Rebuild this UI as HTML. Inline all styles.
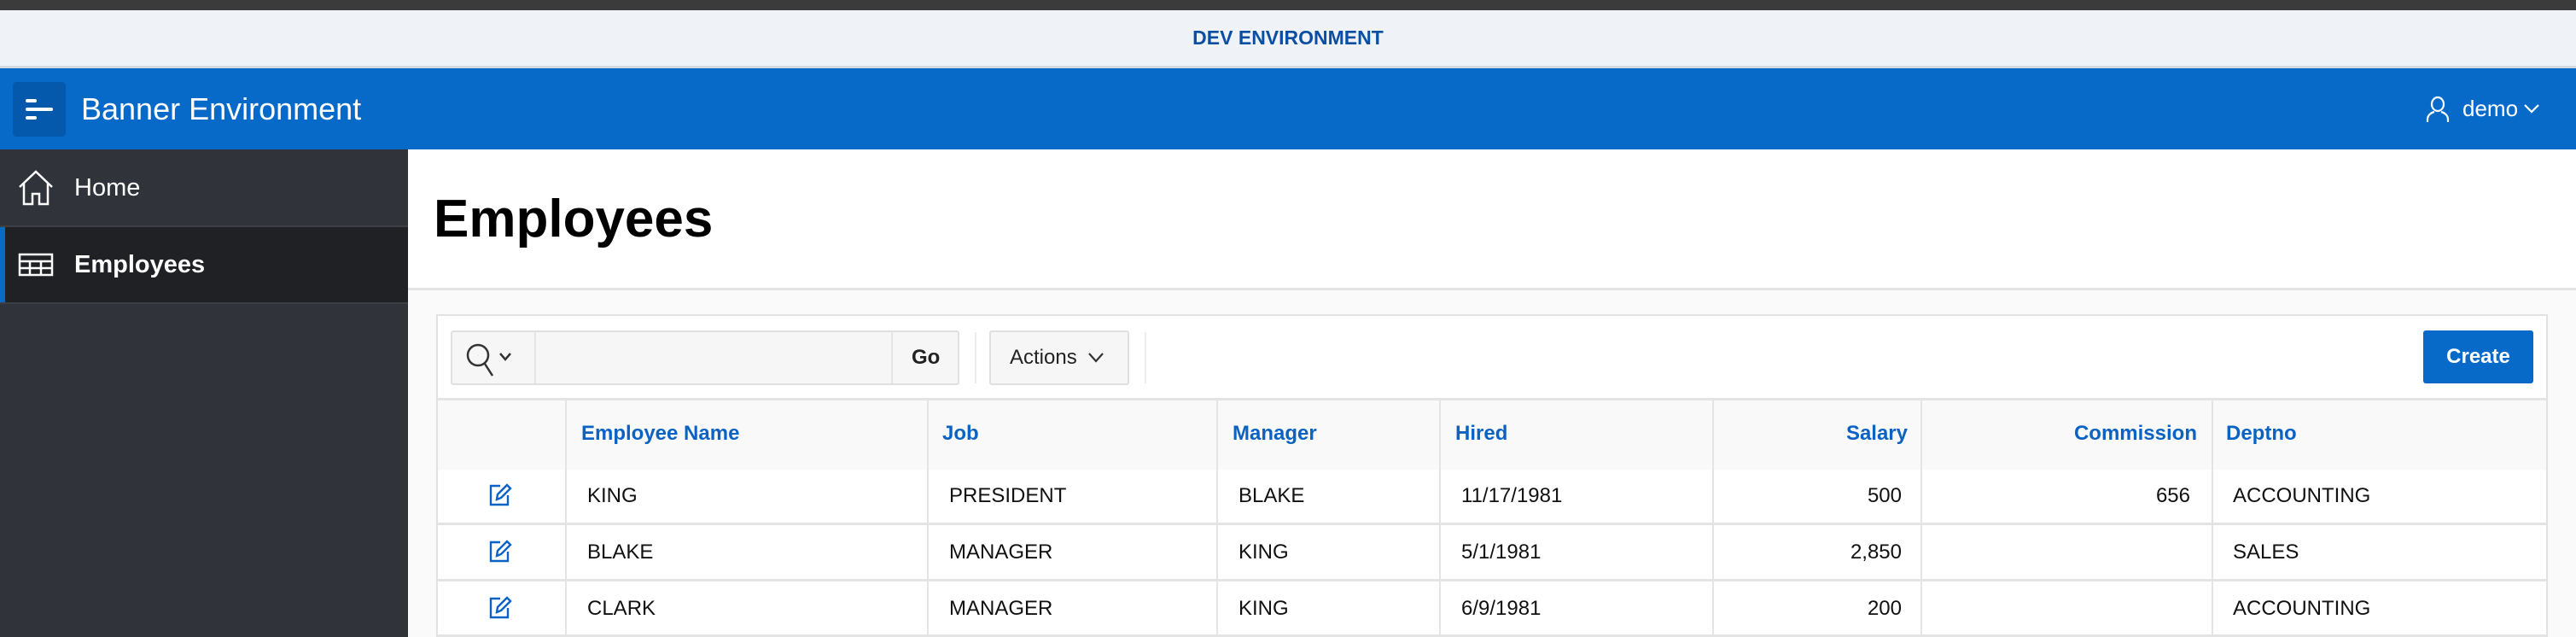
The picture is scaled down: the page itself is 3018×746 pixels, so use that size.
<!DOCTYPE html>
<html style="overflow:hidden;width:3018px;height:746px"><head><meta charset="utf-8"><style>
*{margin:0;padding:0;box-sizing:border-box}
body{width:3018px;height:746px;overflow:hidden;background:#fafafa;font-family:"Liberation Sans",sans-serif;position:relative}
.a{position:absolute}
.th{color:#0a63c4;font-weight:bold;font-size:24px}
.td{color:#111;font-size:24px}
.vl{width:2px;background:#e4e4e4}
.hl{height:3px;background:#e4e4e4}
</style></head><body>
<div class="a" style="left:0;top:0;width:3018px;height:12px;background:#3b3b3b"></div>
<div class="a" style="left:0;top:12px;width:3018px;height:65px;background:#eff2f6"></div>
<div class="a" style="left:0;top:29px;width:3018px;text-align:center;color:#0b4fa3;font-weight:bold;font-size:23px;line-height:30px">DEV ENVIRONMENT</div>
<div class="a" style="left:0;top:77px;width:3018px;height:3px;background:#d4d9df"></div>
<div class="a" style="left:0;top:80px;width:3018px;height:95px;background:#076ac8"></div>
<div class="a" style="left:15px;top:96px;width:62px;height:64px;background:#0559ad;border-radius:4px"></div>
<div class="a" style="left:30px;top:116px;width:13px;height:4px;background:#fff;border-radius:2px"></div>
<div class="a" style="left:30px;top:126px;width:32px;height:4px;background:#fff;border-radius:2px"></div>
<div class="a" style="left:30px;top:136px;width:13px;height:4px;background:#fff;border-radius:2px"></div>
<div class="a" style="left:95px;top:106px;color:#fff;font-size:36px;line-height:44px">Banner Environment</div>
<svg class="a" style="left:2842px;top:112px" width="28" height="32" viewBox="0 0 28 32" fill="none" stroke="#fff" stroke-width="2.2"><ellipse cx="14" cy="10" rx="7" ry="8"/><path d="M2 31v-3c0-5 4-8 8-9M26 31v-3c0-5-4-8-8-9"/></svg>
<div class="a" style="left:2885px;top:110px;color:#fff;font-size:26px;line-height:34px">demo</div>
<svg class="a" style="left:2956px;top:121px" width="20" height="12" viewBox="0 0 20 12" fill="none" stroke="#fff" stroke-width="2.2"><path d="M2 2l8 8 8-8"/></svg>
<div class="a" style="left:0;top:175px;width:478px;height:571px;background:#30333a"></div>
<svg class="a" style="left:21px;top:199px" width="42" height="42" viewBox="0 0 42 42" fill="none" stroke="#fff" stroke-width="2.5"><path d="M2 20L21 2l19 18M7 15v25h10V28h8v12h10V15"/></svg>
<div class="a" style="left:87px;top:202px;color:#fff;font-size:29px;line-height:36px">Home</div>
<div class="a" style="left:0;top:264px;width:478px;height:2px;background:#3c3f46"></div>
<div class="a" style="left:0;top:266px;width:478px;height:88px;background:#1f2124"></div>
<div class="a" style="left:0;top:266px;width:6px;height:88px;background:#076ac8"></div>
<div class="a" style="left:0;top:354px;width:478px;height:2px;background:#3c3f46"></div>
<svg class="a" style="left:21px;top:296px" width="42" height="28" viewBox="0 0 42 28" fill="none" stroke="#fff" stroke-width="2.5"><rect x="2" y="2" width="38" height="24"/><path d="M2 10h38M2 18h38M14 10v16M27 10v16"/></svg>
<div class="a" style="left:87px;top:292px;color:#fff;font-size:29px;line-height:36px;font-weight:bold">Employees</div>
<div class="a" style="left:478px;top:175px;width:2540px;height:162px;background:#fff"></div>
<div class="a" style="left:478px;top:337px;width:2540px;height:3px;background:#e4e4e4"></div>
<div class="a" style="left:508px;top:221px;font-size:62px;font-weight:bold;line-height:72px;color:#000">Employees</div>
<div class="a" style="left:511px;top:368px;width:2474px;height:378px;background:#fff;border:2px solid #e2e2e2;border-bottom:none"></div>
<div class="a" style="left:528px;top:387px;width:596px;height:64px;background:#f6f6f6;border:2px solid #e0e0e0;border-radius:3px"></div>
<div class="a" style="left:626px;top:389px;width:2px;height:60px;background:#e4e4e4"></div>
<div class="a" style="left:1044px;top:389px;width:2px;height:60px;background:#e4e4e4"></div>
<svg class="a" style="left:544px;top:400px" width="62" height="42" viewBox="0 0 62 42" fill="none" stroke="#333" stroke-width="2.5"><circle cx="16" cy="16" r="12"/><path d="M24 26l9 14M42 14l6 7 6-7"/></svg>
<div class="a" style="left:1068px;top:403px;font-weight:bold;font-size:24px;color:#222;line-height:32px">Go</div>
<div class="a" style="left:1142px;top:389px;width:2px;height:60px;background:#ececec"></div>
<div class="a" style="left:1159px;top:387px;width:164px;height:64px;background:#f6f6f6;border:2px solid #e0e0e0;border-radius:3px"></div>
<div class="a" style="left:1183px;top:403px;font-size:24px;color:#222;line-height:32px">Actions</div>
<svg class="a" style="left:1274px;top:412px" width="20" height="14" viewBox="0 0 20 14" fill="none" stroke="#333" stroke-width="2.2"><path d="M2 2l8 9 8-9"/></svg>
<div class="a" style="left:1341px;top:389px;width:2px;height:60px;background:#ececec"></div>
<div class="a" style="left:2839px;top:387px;width:129px;height:62px;background:#076ac8;border-radius:3px;color:#fff;font-weight:bold;font-size:24px;text-align:center;line-height:62px">Create</div>
<div class="a" style="left:513px;top:466px;width:2470px;height:3px;background:#e4e4e4"></div>
<div class="a" style="left:513px;top:469px;width:2470px;height:81px;background:#f9f9f9"></div>
<div class="a hl" style="left:513px;top:612px;width:2470px"></div>
<div class="a hl" style="left:513px;top:678px;width:2470px"></div>
<div class="a hl" style="left:513px;top:743px;width:2470px"></div>
<div class="a vl" style="left:662px;top:469px;height:277px"></div>
<div class="a vl" style="left:1086px;top:469px;height:277px"></div>
<div class="a vl" style="left:1425px;top:469px;height:277px"></div>
<div class="a vl" style="left:1686px;top:469px;height:277px"></div>
<div class="a vl" style="left:2006px;top:469px;height:277px"></div>
<div class="a vl" style="left:2250px;top:469px;height:277px"></div>
<div class="a vl" style="left:2591px;top:469px;height:277px"></div>
<div class="a th" style="left:681px;top:494px">Employee Name</div>
<div class="a th" style="left:1104px;top:494px">Job</div>
<div class="a th" style="left:1444px;top:494px">Manager</div>
<div class="a th" style="left:1705px;top:494px">Hired</div>
<div class="a th" style="left:2006px;top:494px;width:229px;text-align:right">Salary</div>
<div class="a th" style="left:2250px;top:494px;width:324px;text-align:right">Commission</div>
<div class="a th" style="left:2608px;top:494px">Deptno</div>
<svg width="0" height="0" style="position:absolute"><defs><g id="e"><path d="M14 4H3v22h20V15" fill="none" stroke="#0a63c4" stroke-width="2.4"/><path d="M10 20l1-6L22 3l4 4-11 11z" fill="none" stroke="#0a63c4" stroke-width="2.4"/></g></defs></svg>
<svg class="a" style="left:572px;top:565px" width="30" height="30"><use href="#e"/></svg>
<svg class="a" style="left:572px;top:631px" width="30" height="30"><use href="#e"/></svg>
<svg class="a" style="left:572px;top:697px" width="30" height="30"><use href="#e"/></svg>
<div class="a td" style="left:688px;top:567px">KING</div>
<div class="a td" style="left:1112px;top:567px">PRESIDENT</div>
<div class="a td" style="left:1451px;top:567px">BLAKE</div>
<div class="a td" style="left:1712px;top:567px">11/17/1981</div>
<div class="a td" style="left:2006px;top:567px;width:222px;text-align:right">500</div>
<div class="a td" style="left:2250px;top:567px;width:316px;text-align:right">656</div>
<div class="a td" style="left:2616px;top:567px">ACCOUNTING</div>
<div class="a td" style="left:688px;top:633px">BLAKE</div>
<div class="a td" style="left:1112px;top:633px">MANAGER</div>
<div class="a td" style="left:1451px;top:633px">KING</div>
<div class="a td" style="left:1712px;top:633px">5/1/1981</div>
<div class="a td" style="left:2006px;top:633px;width:222px;text-align:right">2,850</div>
<div class="a td" style="left:2616px;top:633px">SALES</div>
<div class="a td" style="left:688px;top:699px">CLARK</div>
<div class="a td" style="left:1112px;top:699px">MANAGER</div>
<div class="a td" style="left:1451px;top:699px">KING</div>
<div class="a td" style="left:1712px;top:699px">6/9/1981</div>
<div class="a td" style="left:2006px;top:699px;width:222px;text-align:right">200</div>
<div class="a td" style="left:2616px;top:699px">ACCOUNTING</div>
</body></html>
